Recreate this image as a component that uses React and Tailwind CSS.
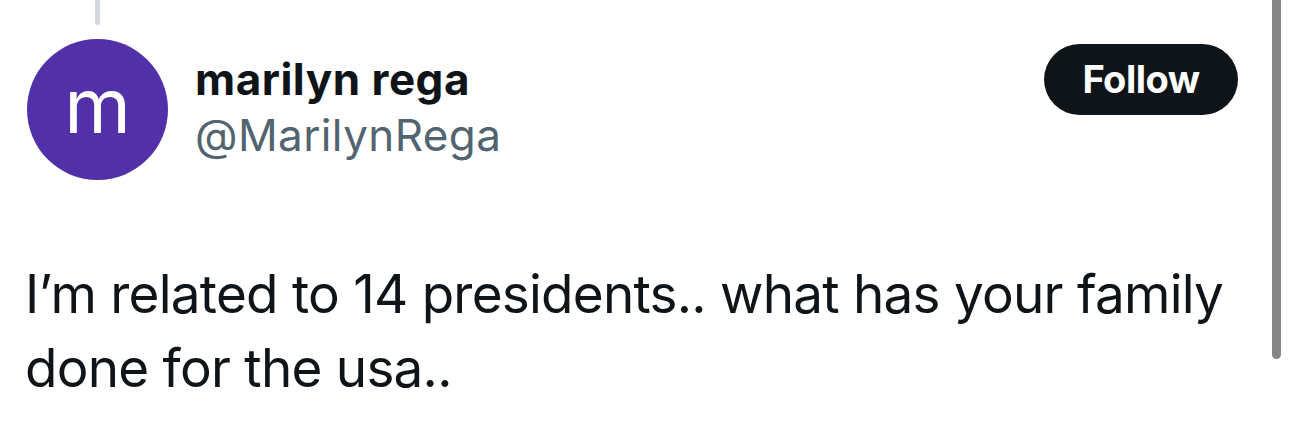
export default function App() {
  return (
    <div
      className="relative w-[1290px] h-[429px] overflow-hidden bg-white"
      style={{ fontFamily: 'Inter, "Noto Sans", sans-serif' }}
    >
      {/* thread line */}
      <div className="absolute left-[95px] top-0 w-[5px] h-[25px] rounded-b-full bg-[#cfd9de]" />

      {/* scrollbar */}
      <div className="absolute left-[1272px] top-0 w-[9px] h-[359px] rounded-b-full bg-[#868686]" />

      <div className="flex items-start pl-[27px] pt-[39px] pr-[52px]">
        <div className="flex h-[141px] w-[141px] shrink-0 items-center justify-center rounded-full bg-[#5231a8]">
          <span className="text-[76px] leading-none text-white -mt-[10px]">m</span>
        </div>
        <div className="ml-[27px] flex flex-col pt-[12px]">
          <span className="text-[44px] font-bold leading-[56px] tracking-[0.5px] text-[#0f1419]">
            marilyn rega
          </span>
          <span className="text-[44px] leading-[56px] tracking-[0.4px] text-[#536471]">
            @MarilynRega
          </span>
        </div>
        <div className="ml-auto mt-[5px] flex h-[71px] w-[194px] items-center justify-center rounded-full bg-[#0f1419]">
          <span className="text-[38px] font-bold tracking-[-0.5px] text-white">Follow</span>
        </div>
      </div>

      <p className="mt-[77px] pl-[25px] pr-[45px] text-[53px] leading-[74px] tracking-[-0.75px] text-[#0f1419]">
        I’m related to 14 presidents.. what has your family done for the usa..
      </p>
    </div>
  );
}
